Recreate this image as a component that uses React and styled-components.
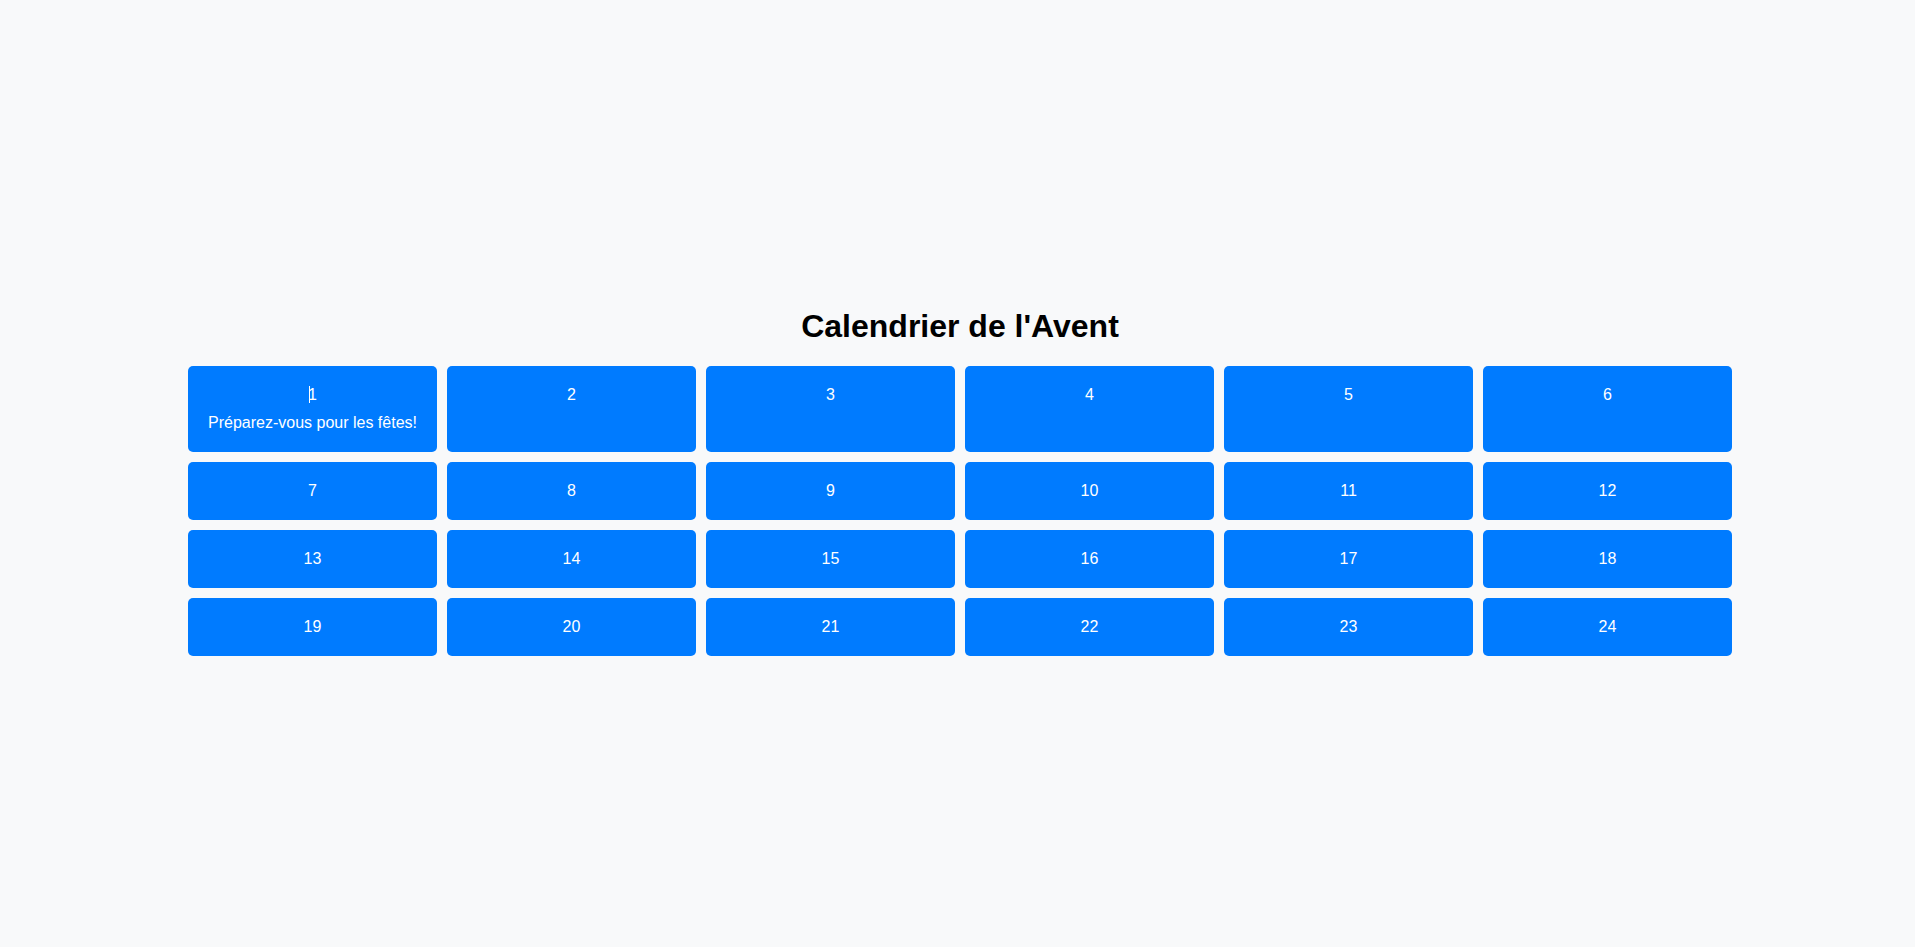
import React from "react";
import styled, { createGlobalStyle } from "styled-components";

const GlobalStyle = createGlobalStyle`
  html, body {
    margin: 0;
    padding: 0;
    background-color: #f8f9fa;
    font-family: "Liberation Sans", Arial, sans-serif;
  }
`;

const Page = styled.div`
  box-sizing: border-box;
  min-height: 100vh;
  display: flex;
  flex-direction: column;
  align-items: center;
  justify-content: center;
  padding: 0 183px 4px 188px;
`;

const Title = styled.h1`
  font-size: 32px;
  font-weight: bold;
  color: #000;
  margin: 21.44px 0;
`;

const Grid = styled.div`
  width: 100%;
  display: grid;
  grid-template-columns: repeat(6, 1fr);
  gap: 10px;
`;

const Door = styled.div`
  background-color: #007bff;
  color: #fff;
  border-radius: 5px;
  padding: 20px;
  text-align: center;
  font-size: 16px;
  cursor: pointer;
`;

const Number = styled.div`
  position: relative;
  display: inline-block;
`;

const Caret = styled.span`
  position: absolute;
  left: 1px;
  top: 0;
  width: 1px;
  height: 17px;
  background-color: #fff;
`;

const Message = styled.p`
  margin: 10px 0 0;
`;

const messages = {
  1: "Préparez-vous pour les fêtes!",
};

export default function App() {
  const days = Array.from({ length: 24 }, (_, i) => i + 1);

  return (
    <>
      <GlobalStyle />
      <Page>
        <Title>Calendrier de l'Avent</Title>
        <Grid>
          {days.map((day) => (
            <Door key={day}>
              <Number>
                {day === 1 && <Caret />}
                {day}
              </Number>
              {messages[day] && <Message>{messages[day]}</Message>}
            </Door>
          ))}
        </Grid>
      </Page>
    </>
  );
}
